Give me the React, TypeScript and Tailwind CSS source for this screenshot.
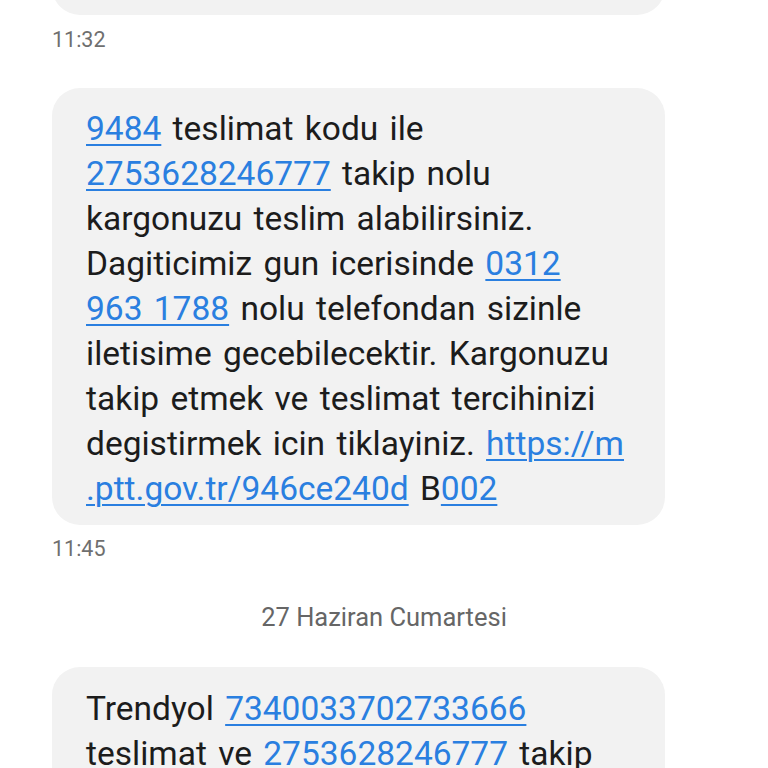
import React from 'react'

const L = ({ children }: { children: React.ReactNode }) => (
  <span className="text-[#2a7fe0] underline decoration-[1.5px] underline-offset-[4px]">{children}</span>
)

function Bubble({ children, className = '' }: { children: React.ReactNode; className?: string }) {
  return (
    <div className={`mx-[52px] w-[613px] rounded-[28px] bg-[#f2f2f2] pl-[34px] pr-[30px] text-[33.5px] leading-[45px] text-[#1c1c1c] whitespace-nowrap [word-spacing:3px] ${className}`}>
      {children}
    </div>
  )
}

export default function App() {
  return (
    <div className="h-[768px] w-[768px] overflow-hidden bg-white font-['Roboto',sans-serif]">
      {/* previous message (cut off) */}
      <Bubble className="-mt-[60px] h-[75px]">{null}</Bubble>
      <div className="ml-[52px] mt-[15px] text-[21.5px] leading-[20px] text-[#6f6f6f]">11:32</div>

      <Bubble className="mt-[38px] pt-[18px] pb-[14px]">
        <L>9484</L> teslimat kodu ile
        <br />
        <L>2753628246777</L> takip nolu
        <br />
        kargonuzu teslim alabilirsiniz.
        <br />
        Dagiticimiz gun icerisinde <L>0312</L>
        <br />
        <L>963 1788</L> nolu telefondan sizinle
        <br />
        iletisime gecebilecektir. Kargonuzu
        <br />
        takip etmek ve teslimat tercihinizi
        <br />
        degistirmek icin tiklayiniz. <L>https://m</L>
        <br />
        <L>.ptt.gov.tr/946ce240d</L> B<L>002</L>
      </Bubble>
      <div className="ml-[52px] mt-[14px] text-[21.5px] leading-[20px] text-[#6f6f6f]">11:45</div>

      <div className="mt-[46px] text-center text-[25.5px] leading-[24px] text-[#666666]">27 Haziran Cumartesi</div>

      <Bubble className="mt-[38px] pt-[19px] pb-[15px]">
        Trendyol <L>7340033702733666</L>
        <br />
        teslimat ve <L>2753628246777</L> takip
        <br />
        nolu kargonuzu teslim alabilirsiniz.
      </Bubble>
    </div>
  )
}
